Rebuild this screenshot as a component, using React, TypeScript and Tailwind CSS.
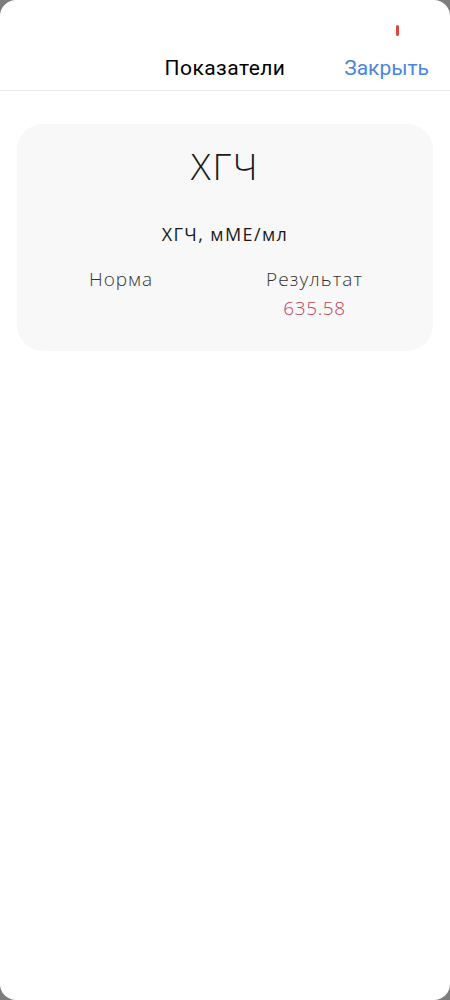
import React from 'react';

const App = () => {
  return (
    <div className="w-[450px] h-[1000px] bg-[#7d7d7d]">
      <div className="h-full bg-white rounded-[16px] overflow-hidden flex flex-col">
        {/* status area */}
        <div className="h-[50px] flex justify-end pr-[51px] pt-[25px]">
          <div className="w-[3px] h-[11px] rounded-full bg-[#e0443a]" />
        </div>
        <header className="relative h-[41px] border-b border-[#e6e6e6] flex items-start justify-center font-['Roboto',sans-serif]">
          <h1 className="text-[21px] leading-[36px] tracking-[0.45px] text-black">Показатели</h1>
          <button className="absolute right-[21px] top-0 text-[21px] leading-[36px] text-[#4a86db]">Закрыть</button>
        </header>
        <section className="px-[17px] pt-[33px]">
          <div className="bg-[#f8f8f8] rounded-[26px] h-[227px] flex flex-col items-center font-['Open_Sans',sans-serif] text-[#1a1a1a]">
            <div className="mt-[18px] text-[37px] leading-[48px] font-light tracking-[1.7px]">ХГЧ</div>
            <div className="mt-[32px] text-[18px] leading-[24px] font-medium tracking-[1.4px]">ХГЧ, мМЕ/мл</div>
            <div className="mt-[21px] w-full flex">
              <div className="w-1/2 flex flex-col items-center">
                <span className="text-[19px] leading-[24px] font-light tracking-[1px] text-[#333]">Норма</span>
              </div>
              <div className="w-1/2 flex flex-col items-center pr-[29px]">
                <span className="text-[19px] leading-[24px] font-light tracking-[1.1px] text-[#333]">Результат</span>
                <span className="mt-[5px] text-[19px] leading-[24px] font-light tracking-[0.6px] text-[#c0435a]">635.58</span>
              </div>
            </div>
          </div>
        </section>
      </div>
    </div>
  );
};

export default App;
